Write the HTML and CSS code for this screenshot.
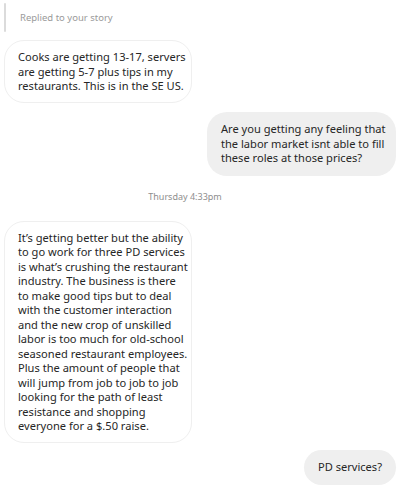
FILE: index.html
```
<!DOCTYPE html>
<html>
<head>
<meta charset="utf-8">
<link rel="stylesheet" href="styles.css">
</head>
<body>
<div class="thread">
  <div class="reply-note">
    <div class="reply-bar"></div>
    <span class="reply-text">Replied to your story</span>
  </div>
  <div class="row left">
    <div class="bubble in b1">Cooks are getting 13-17, servers<br>are getting 5-7 plus tips in my<br>restaurants. This is in the SE US.</div>
  </div>
  <div class="row right">
    <div class="bubble out b2">Are you getting any feeling that<br>the labor market isnt able to fill<br>these roles at those prices?</div>
  </div>
  <div class="stamp">Thursday 4:33pm</div>
  <div class="row left">
    <div class="bubble in b3">It’s getting better but the ability<br>to go work for three PD services<br>is what’s crushing the restaurant<br>industry. The business is there<br>to make good tips but to deal<br>with the customer interaction<br>and the new crop of unskilled<br>labor is too much for old-school<br>seasoned restaurant employees.<br>Plus the amount of people that<br>will jump from job to job to job<br>looking for the path of least<br>resistance and shopping<br>everyone for a $.50 raise.</div>
  </div>
  <div class="row right">
    <div class="bubble out b4">PD services?</div>
  </div>
</div>
</body>
</html>
```
FILE: styles.css
```
html, body {
  margin: 0;
  padding: 0;
  background: #ffffff;
}
body {
  font-family: "Noto Sans", "Open Sans", sans-serif;
  color: #262626;
}
.thread {
  display: flex;
  flex-direction: column;
  padding: 3px 8px 0 4px;
}
.reply-note {
  display: flex;
  align-items: center;
  height: 29px;
  gap: 14px;
}
.reply-bar {
  width: 2px;
  align-self: stretch;
  background: #dbdbdb;
  border-radius: 1px;
}
.reply-text {
  font-size: 9.5px;
  color: #9a9a9a;
}
.row {
  display: flex;
}
.row.left { justify-content: flex-start; }
.row.right { justify-content: flex-end; }
.bubble {
  font-size: 11.1px;
  line-height: 14.5px;
  border-radius: 20px;
  box-sizing: border-box;
  white-space: nowrap;
}
.bubble.in {
  border: 1px solid #efefef;
  background: #fff;
  padding: 9px 13px 8.5px;
  width: 188px;
}
.bubble.out {
  background: #efefef;
  padding: 10px 14px;
}
.b1 { margin-top: 8px; }
.b2 { margin-top: 9px; width: 189px; }
.stamp {
  font-size: 9px;
  color: #8e8e8e;
  text-align: center;
  margin: 14px 30px 0 0;
  line-height: 14px;
}
.b3 { margin-top: 17px; }
.b4 { margin-top: 7px; padding: 11px 14px; }
```
